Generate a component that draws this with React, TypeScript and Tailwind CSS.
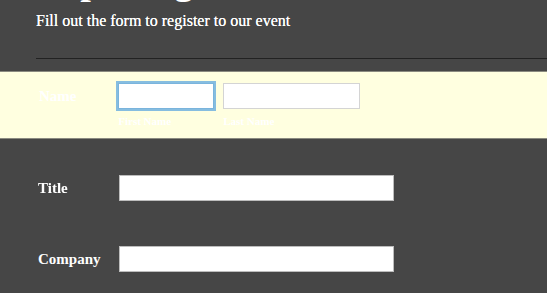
export default function App() {
  return (
    <div className="h-[293px] w-full overflow-hidden bg-[#464646] font-['Liberation_Serif',serif] text-white">
      <div className="pl-[36px]">
        <h1 className="-mt-[38px] h-[38px] text-[38px] font-bold leading-[38px]">Expo Registration</h1>
        <p className="mt-[10px] text-[16px] font-medium leading-[22px] [text-shadow:0_0_0.4px_#fff]">
          Fill out the form to register to our event
        </p>
        <div className="mt-[26px] border-b border-[#222]" />
      </div>

      <div className="mt-[12px] flex border-y border-[#8a8a80] bg-[#ffffe0] pb-[9px] pt-[11px]">
        <label className="h-[26px] w-[118px] pl-[39px] text-[15px] font-bold leading-[26px]">Name</label>
        <div className="flex gap-[9px]">
          <div className="flex flex-col">
            <input
              autoFocus
              className="h-[26px] w-[96px] border border-[#7ab4dc] bg-white px-1 text-black outline-none ring-2 ring-[#86bde0]"
            />
            <span className="mt-[4px] text-[11px] font-bold leading-[16px]">First Name</span>
          </div>
          <div className="flex flex-col">
            <input className="h-[26px] w-[137px] border border-[#d4d4d4] bg-white px-1 text-black outline-none" />
            <span className="mt-[4px] text-[11px] font-bold leading-[16px]">Last Name</span>
          </div>
        </div>
      </div>

      <div className="mt-[36px] flex items-center">
        <label className="w-[119px] pl-[38px] text-[15px] font-bold">Title</label>
        <input className="h-[26px] w-[275px] border border-[#bdbdbd] bg-white outline-none" />
      </div>

      <div className="mt-[45px] flex items-center">
        <label className="w-[119px] pl-[38px] text-[15px] font-bold">Company</label>
        <input className="h-[26px] w-[275px] border border-[#bdbdbd] bg-white outline-none" />
      </div>
    </div>
  );
}
